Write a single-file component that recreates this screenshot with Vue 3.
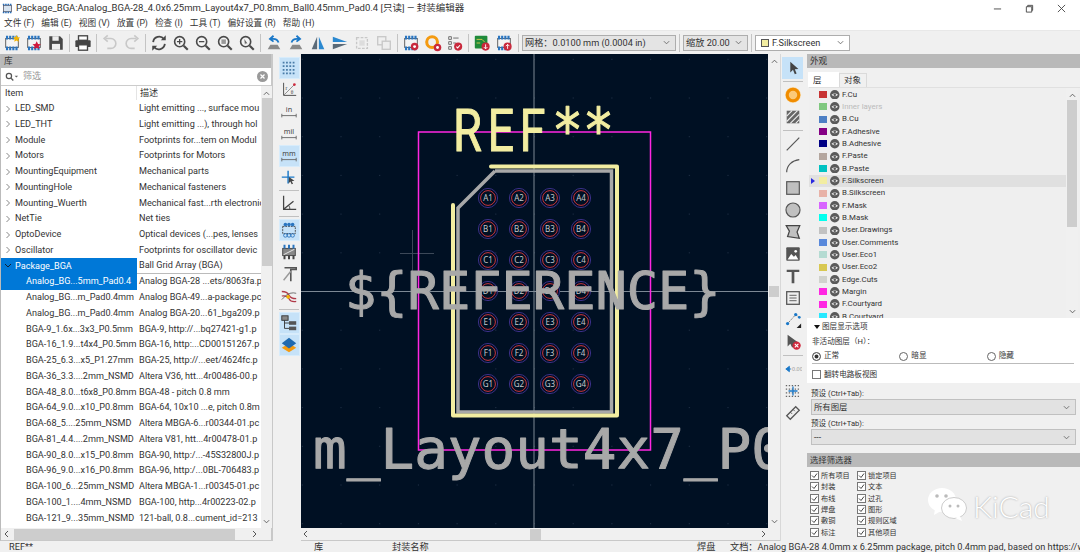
<template>
  <div class="app">
    <header class="titlebar">
      <div class="title-row">
        <svg class="app-icon" viewBox="0 0 14 14"><rect x="2" y="3" width="10" height="8" fill="#d8e4f0" stroke="#556" /><path d="M2 1v2M5 1v2M8 1v2M11 1v2M2 11v2M5 11v2M8 11v2M11 11v2" stroke="#2a6fb8" stroke-width="2" /></svg>
        <span class="title-text">Package_BGA:Analog_BGA-28_4.0x6.25mm_Layout4x7_P0.8mm_Ball0.45mm_Pad0.4 [只读] — 封装编辑器</span>
        <div class="win-btns">
          <svg viewBox="0 0 10 10"><path d="M1 5.5h8" stroke="#444" /></svg>
          <svg viewBox="0 0 10 10"><path d="M1.5 3h6v6h-6zM3 3V1.5h5.5V7H7.5" fill="none" stroke="#444" /></svg>
          <svg viewBox="0 0 10 10"><path d="M1 1l8 8M9 1l-8 8" stroke="#444" /></svg>
        </div>
      </div>
      <nav class="menu">
        <span v-for="m in menus" :key="m">{{ m }}</span>
      </nav>
    </header>

    <div class="toolbar">
      <template v-for="(t, i) in topTools" :key="i">
        <i v-if="t === '|'" class="sep-v"></i>
        <span v-else class="tool"><svg viewBox="0 0 20 20" v-html="icons[t]"></svg></span>
      </template>
      <i class="sep-v tight"></i>
      <div class="combo grid-combo"><span>网格：0.0100 mm (0.0004 in)</span><svg viewBox="0 0 8 5"><path d="M1 1l3 3 3-3" fill="none" stroke="#666" /></svg></div>
      <i class="sep-v tight"></i>
      <div class="combo zoom-combo"><span>缩放 20.00</span><svg viewBox="0 0 8 5"><path d="M1 1l3 3 3-3" fill="none" stroke="#666" /></svg></div>
      <i class="sep-v tight"></i>
      <div class="combo layer-combo"><b class="layer-dot"></b><span>F.Silkscreen</span><svg viewBox="0 0 8 5"><path d="M1 1l3 3 3-3" fill="none" stroke="#666" /></svg></div>
    </div>

    <main class="main">
      <aside class="lib">
        <div class="pane-head">库</div>
        <div class="search">
          <svg class="search-ico" viewBox="0 0 16 10"><circle cx="4.5" cy="4.5" r="3" fill="none" stroke="#555" stroke-width="1.4" /><path d="M7 7l2.5 2.5" stroke="#555" stroke-width="1.5" /><path d="M11 4h4l-2 2z" fill="#666" /></svg>
          <span class="search-text">筛选</span>
          <svg class="search-x" viewBox="0 0 11 11"><circle cx="5.5" cy="5.5" r="5.5" fill="#9a9a9a" /><path d="M3.5 3.5l4 4M7.5 3.5l-4 4" stroke="#fff" stroke-width="1.2" /></svg>
        </div>
        <div class="table-wrap">
          <div class="table">
            <div class="thead"><span class="th-a">Item</span><span class="th-b">描述</span></div>
            <div v-for="(r, i) in rows" :key="i" class="row">
              <span class="cell-a" :class="{ sel: r.sel, child: r.child }">
                <svg v-if="!r.child" class="arrow" viewBox="0 0 6 8"><path :d="r.open ? 'M0 2l3 3 3-3' : 'M1.5 1l3 3-3 3'" fill="none" :stroke="r.open ? '#123' : '#888'" /></svg>
                {{ r.n }}
              </span>
              <span class="cell-b" :class="{ under: r.open }">{{ r.d }}</span>
            </div>
          </div>
          <div class="vscroll">
            <svg viewBox="0 0 8 5"><path d="M1 4l3-3 3 3" fill="none" stroke="#555" /></svg>
            <div class="vthumb"></div>
            <svg class="down" viewBox="0 0 8 5"><path d="M1 1l3 3 3-3" fill="none" stroke="#555" /></svg>
          </div>
        </div>
        <div class="hscroll">
          <svg viewBox="0 0 5 8"><path d="M4 1L1 4l3 3" fill="none" stroke="#555" /></svg>
          <div class="hthumb"></div>
          <svg viewBox="0 0 5 8"><path d="M1 1l3 3-3 3" fill="none" stroke="#555" /></svg>
        </div>
      </aside>

      <div class="strip left-strip">
        <template v-for="(t, i) in leftTools" :key="i">
          <i v-if="t === '|'" class="sep-h"></i>
          <i v-else-if="t === '-'" class="sep-h thin"></i>
          <span v-else class="vtool" :class="{ on: t.on }"><svg viewBox="0 0 20 20" v-html="icons[t.i]"></svg></span>
        </template>
      </div>

      <section class="canvas-col">
        <div class="canvas-row">
          <svg class="canvas" viewBox="301 54 467 474">
            <defs>
              <pattern id="griddots" x="534" y="291" width="38.7" height="38.7" patternUnits="userSpaceOnUse">
                <rect x="0" y="0" width="1" height="1" fill="#24344a" />
              </pattern>
            </defs>
            <rect x="301" y="54" width="467" height="474" fill="#001023" />
            <rect x="301" y="54" width="467" height="474" fill="url(#griddots)" />
            <path d="M400 253.5h34M412.5 230v50" stroke="#3c4858" />
            <path d="M534 54v474M301 291.5h467" stroke="#7c8894" />
            <polyline points="495,171 611.5,171 611.5,412 458,412 458,208 495,171" fill="none" stroke="#a8a8a8" stroke-width="3.5" />
            <polyline points="491,166.5 617,166.5 617,415.5 453,415.5 453,205" fill="none" stroke="#f2eda1" stroke-width="4" stroke-linecap="round" stroke-linejoin="round" />
            <rect x="418.5" y="132" width="232" height="318" fill="none" stroke="#ff26e2" stroke-width="1.5" />
            <g v-for="p in pads" :key="p.t">
              <circle :cx="p.x" :cy="p.y" r="9.6" fill="#001023" stroke="#3a2f86" />
              <circle :cx="p.x" :cy="p.y" r="7.4" fill="none" stroke="#c8323c" />
              <text :x="p.x" :y="p.y + 3" class="pad-text" text-anchor="middle">{{ p.t }}</text>
            </g>
            <text x="453" y="151" class="fp-text silk ref-a" textLength="98" lengthAdjust="spacingAndGlyphs" letter-spacing="7">REF</text>
            <text x="552" y="151" class="fp-text silk" textLength="62" lengthAdjust="spacingAndGlyphs">**</text>
            <text x="345" y="309" class="fp-text fab ref">${REFERENCE}</text>
            <text x="313" y="468" class="fp-text fab val">m_Layout4x7_P0</text>
          </svg>
          <div class="vscroll cv">
            <svg viewBox="0 0 8 5"><path d="M1 4l3-3 3 3" fill="none" stroke="#555" /></svg>
            <div class="cv-thumb"></div>
            <svg class="down" viewBox="0 0 8 5"><path d="M1 1l3 3 3-3" fill="none" stroke="#555" /></svg>
          </div>
        </div>
        <div class="hscroll cvh">
          <svg viewBox="0 0 5 8"><path d="M4 1L1 4l3 3" fill="none" stroke="#555" /></svg>
          <div class="cvh-track"><div class="cvh-thumb"></div></div>
          <svg viewBox="0 0 5 8"><path d="M1 1l3 3-3 3" fill="none" stroke="#555" /></svg>
        </div>
      </section>

      <div class="strip right-strip">
        <template v-for="(t, i) in rightTools" :key="i">
          <i v-if="t === '|'" class="sep-h"></i>
          <span v-else class="vtool" :class="{ on: t.on }"><svg viewBox="0 0 20 20" v-html="icons[t.i]"></svg></span>
        </template>
      </div>

      <aside class="side">
        <div class="pane-head">外观</div>
        <div class="tabs"><span class="tab active">层</span><span class="tab">对象</span></div>
        <div class="layers-box">
          <div class="layers">
            <div v-for="l in layers" :key="l.n" class="layer" :class="{ cur: l.n === 'F.Silkscreen', dim: l.dim }">
              <svg v-if="l.n === 'F.Silkscreen'" class="cur-mark" viewBox="0 0 4 6"><path d="M0 0l4 3-4 3z" fill="#2a2ae0" /></svg>
              <b class="swatch" :style="{ background: l.c }"></b>
              <svg class="eye" viewBox="0 0 10 10"><circle cx="5" cy="5" r="5" fill="#5a5a5a" /><path d="M1.5 5Q5 1.8 8.5 5 5 8.2 1.5 5z" fill="#e8e8e8" /><circle cx="5" cy="5" r="1.3" fill="#5a5a5a" /></svg>
              <span>{{ l.n }}</span>
            </div>
          </div>
          <div class="vscroll lay">
            <svg viewBox="0 0 8 5"><path d="M1 4l3-3 3 3" fill="none" stroke="#555" /></svg>
            <div class="lay-thumb"></div>
            <svg class="down" viewBox="0 0 8 5"><path d="M1 1l3 3 3-3" fill="none" stroke="#555" /></svg>
          </div>
        </div>
        <div class="opts">
          <div class="opts-title"><svg viewBox="0 0 6 4"><path d="M0 0h6L3 4z" fill="#111" /></svg>图层显示选项</div>
          <div class="opts-label">非活动图层（H）：</div>
          <div class="radios">
            <label><i class="radio on"></i>正常</label>
            <label><i class="radio"></i>暗显</label>
            <label><i class="radio"></i>隐藏</label>
          </div>
          <label class="flip"><i class="box"></i>翻转电路板视图</label>
        </div>
        <div class="presets">
          <div class="pre-label">预设 (Ctrl+Tab):</div>
          <div class="pre-combo"><span>所有图层</span><svg viewBox="0 0 8 5"><path d="M1 1l3 3 3-3" fill="none" stroke="#666" /></svg></div>
          <div class="pre-label">预设 (Ctrl+Tab):</div>
          <div class="pre-combo"><span>---</span><svg viewBox="0 0 8 5"><path d="M1 1l3 3 3-3" fill="none" stroke="#666" /></svg></div>
        </div>
        <div class="pane-head filter-head">选择筛选器</div>
        <div class="filters">
          <label v-for="f in filters" :key="f" class="filter">
            <svg viewBox="0 0 9 9"><rect x=".5" y=".5" width="8" height="8" fill="#fff" stroke="#777" /><path d="M2 4.5l2 2 3-4" fill="none" stroke="#444" /></svg>{{ f }}
          </label>
        </div>
      </aside>
    </main>

    <footer class="status">
      <span class="st-a">REF**</span>
      <span class="st-b">库</span>
      <span class="st-c">封装名称</span>
      <span class="st-d">焊盘</span>
      <span class="st-e">文档：Analog BGA-28 4.0mm x 6.25mm package, pitch 0.4mm pad, based on https://w</span>
    </footer>

    <div class="watermark">
      <svg viewBox="0 0 40 34">
        <ellipse cx="15" cy="13" rx="14" ry="12" fill="#fff" />
        <path d="M8 22l-1 6 7-4z" fill="#fff" />
        <ellipse cx="27" cy="21" rx="12.5" ry="10.5" fill="#fff" stroke="#ccc" stroke-width="1" />
        <path d="M33 29l2 5-7-3z" fill="#fff" />
        <circle cx="10" cy="9" r="1.8" fill="#bbb" /><circle cx="19" cy="9" r="1.8" fill="#bbb" />
        <circle cx="23" cy="19" r="1.5" fill="#bbb" /><circle cx="31" cy="19" r="1.5" fill="#bbb" />
      </svg>
      <span>KiCad</span>
    </div>
  </div>
</template>

<script setup>
const menus = ['文件 (F)', '编辑 (E)', '视图 (V)', '放置 (P)', '检查 (I)', '工具 (T)', '偏好设置 (R)', '帮助 (H)']

const chip = '<rect x="3" y="5" width="14" height="10" fill="#f4f4f4" stroke="#555"/><path d="M4.5 2v4M8 2v4M11.5 2v4M15 2v4M4.5 14v4M8 14v4M11.5 14v4M15 14v4" stroke="#2a75c0" stroke-width="2.4"/>'
const gear = (x, y) => `<circle cx="${x}" cy="${y}" r="4.2" fill="#c8283c"/><circle cx="${x}" cy="${y}" r="1.6" fill="#fff"/>`
const lens = '<circle cx="8.5" cy="8.5" r="5.6" fill="#f4f4f4" stroke="#4a4a4a" stroke-width="1.8"/><path d="M13 13l4.5 4.5" stroke="#4a4a4a" stroke-width="2.4"/>'

const icons = {
  fpNew: chip + '<path d="M15 1l1.2 2.6 2.8.3-2 2 .5 2.8-2.5-1.4-2.5 1.4.5-2.8-2-2 2.8-.3z" fill="#f4b400"/>',
  fpOpen: chip + '<path d="M13 8l1.5 3 3.2.4-2.4 2.2.7 3.2-3-1.6-3 1.6.7-3.2-2.4-2.2 3.2-.4z" fill="#d0183c"/>',
  save: '<path d="M2.5 2.5h12l3 3v12h-15z" fill="#484848"/><rect x="6" y="2.5" width="7" height="5" fill="#eee"/><rect x="5.5" y="11" width="9" height="6.5" fill="#eee"/>',
  print: '<rect x="5" y="2" width="10" height="5" fill="#fff" stroke="#444" stroke-width="1.5"/><rect x="1.5" y="7" width="17" height="7.5" rx="1" fill="#444"/><rect x="5" y="12" width="10" height="6" fill="#fff" stroke="#444" stroke-width="1.5"/>',
  undo: '<path d="M5 5h6a5 5 0 0 1 0 11H7" fill="none" stroke="#c8c8c8" stroke-width="1.8"/><path d="M7.5 1.5L3.5 5l4 3.5" fill="none" stroke="#c8c8c8" stroke-width="1.8"/>',
  redo: '<path d="M15 5H9a5 5 0 0 0 0 11h4" fill="none" stroke="#c8c8c8" stroke-width="1.8"/><path d="M12.5 1.5l4 3.5-4 3.5" fill="none" stroke="#c8c8c8" stroke-width="1.8"/>',
  refresh: '<path d="M3.5 9A6.8 6.8 0 0 1 15.5 5.5M16.5 11A6.8 6.8 0 0 1 4.5 14.5" fill="none" stroke="#484848" stroke-width="2"/><path d="M17.5 1.5v5.5h-5.5zM2.5 18.5V13H8z" fill="#484848"/>',
  zoomIn: lens + '<path d="M5.5 8.5h6M8.5 5.5v6" stroke="#4a4a4a" stroke-width="1.4"/>',
  zoomOut: lens + '<path d="M5.5 8.5h6" stroke="#4a4a4a" stroke-width="1.4"/>',
  zoomFit: lens + '<rect x="6" y="6" width="5" height="5" fill="#999"/>',
  zoomObj: lens + '<path d="M7 5.5l3.5 5-2-.3-.8 1.8z" fill="#666"/>',
  rotL: '<path d="M3 17h14l-3-5H6z" fill="#8a8a8a"/><path d="M15 9.5C14 6 10.5 5 7 5.5M9.5 2L5.5 5.5l4 3" fill="none" stroke="#1a78c8" stroke-width="2"/>',
  rotR: '<path d="M3 17h14l-3-5H6z" fill="#8a8a8a"/><path d="M5 9.5C6 6 9.5 5 13 5.5M10.5 2l4 3.5-4 3" fill="none" stroke="#1a78c8" stroke-width="2"/>',
  mirV: '<path d="M9 3v14H3z" fill="#5a6a78"/><path d="M11 3v14h6z" fill="#2a88d0"/>',
  mirH: '<path d="M2 3l16 6H2z" fill="#2a88d0"/><path d="M2 17l16-6H2z" fill="#5a6a78"/>',
  group: '<rect x="4" y="4" width="12" height="12" fill="none" stroke="#c8c8c8" stroke-width="1.5" stroke-dasharray="3 1.5"/><rect x="7" y="7" width="6" height="6" fill="#ddd"/>',
  ungroup: '<rect x="3" y="3" width="9" height="9" fill="none" stroke="#c8c8c8" stroke-width="1.5"/><rect x="8" y="8" width="9" height="9" fill="#eee" stroke="#c8c8c8" stroke-width="1.5"/>',
  fpProp: chip + gear(14, 14),
  padProp: '<circle cx="9" cy="9" r="6" fill="none" stroke="#f49a10" stroke-width="3.4"/>' + gear(15, 15),
  check: '<path d="M3 3h3v3H3zM3 8.500h3v3H3zM3 14h3v3H3z" fill="none" stroke="#666"/><path d="M8 4.500h6M8 10h3" stroke="#666"/><circle cx="13.500" cy="14" r="4.500" fill="#c8283c"/><path d="M11.500 14l1.500 1.500 2.500-3" fill="none" stroke="#fff" stroke-width="1.200"/>',
  pcbIn: '<rect x="2" y="2" width="14" height="14" rx="1" fill="#1f8a3a"/><path d="M4 6h6l3 3M4 10h4" stroke="#d8c850" fill="none"/><circle cx="14" cy="14" r="4.500" fill="#c8283c"/><path d="M14 11.500v5M12 14.500l2 2 2-2" stroke="#fff" fill="none"/>',
  fpOut: chip + '<circle cx="14" cy="14" r="4.500" fill="#c8283c"/><path d="M14 16.500v-5M12 13.500l2-2 2 2" stroke="#fff" fill="none"/>',
  grid: '<path d="M3 4h14M3 8h14M3 12h14M3 16h14" stroke="#4a7ca8" stroke-width="2" stroke-dasharray="2 1.700"/>',
  polar: '<path d="M4 2v14h14" fill="none" stroke="#444"/><path d="M4 16L16 4" stroke="#888"/><circle cx="16" cy="4" r="1.500" fill="#d0283c"/><text x="6" y="10" font-size="6" fill="#444" font-family="Liberation Serif">r</text><text x="12" y="14" font-size="6" fill="#444" font-family="Liberation Serif">θ</text>',
  inch: '<text x="10" y="10" font-size="8" text-anchor="middle" fill="#444" font-family="Noto Sans">in</text><path d="M2 14h16M2 12v4M18 12v4" stroke="#666"/>',
  mil: '<text x="10" y="10" font-size="8" text-anchor="middle" fill="#444" font-family="Noto Sans">mil</text><path d="M2 14h16M2 12v4M18 12v4" stroke="#666"/>',
  mm: '<text x="10" y="10" font-size="8" text-anchor="middle" fill="#444" font-family="Noto Sans">mm</text><path d="M2 14h16M2 12v4M18 12v4" stroke="#666"/>',
  cursorFull: '<path d="M9 2v14M2 9h14" stroke="#1a78c8" stroke-width="1.600"/><path d="M10 9l6 4-3 .500 1.500 3-1.500.500-1.500-3-2 2z" fill="#444"/>',
  angle: '<path d="M4 2v15h14M4 17L15 8" fill="none" stroke="#444" stroke-width="1.400"/><path d="M11 17a7 7 0 0 0-1.500-4.500" fill="none" stroke="#444"/>',
  padsSketch: '<rect x="3" y="6" width="14" height="8" fill="none" stroke="#444" stroke-dasharray="2 1"/><circle cx="6" cy="4" r="2" fill="#2a75c0"/><circle cx="10" cy="4" r="2" fill="#2a75c0"/><circle cx="14" cy="4" r="2" fill="#2a75c0"/><circle cx="6" cy="16" r="2" fill="none" stroke="#2a75c0"/><circle cx="10" cy="16" r="2" fill="none" stroke="#2a75c0"/><circle cx="14" cy="16" r="2" fill="none" stroke="#2a75c0"/>',
  modSketch: '<rect x="3" y="6" width="14" height="8" fill="#888" stroke="#444"/><path d="M5 2v4M10 2v4M15 2v4" stroke="#2a75c0" stroke-width="2.200"/><path d="M5 14v4M10 14v4M15 14v4" stroke="#444" stroke-width="2.200"/><path d="M4 13L16 7" stroke="#eee"/>',
  textSketch: '<path d="M5 3h13v2H12v13" fill="none" stroke="#555" stroke-width="1.800"/><path d="M12 7L4 17" stroke="#999" stroke-width="1.600"/>',
  ratsnest: '<path d="M2 5q6 0 8 4t8 4M2 10q6-1 8 3t8 3" fill="none" stroke="#b03a48" stroke-width="1.400"/><path d="M2 14q5-6 9-7t7 0" fill="none" stroke="#666"/><circle cx="9" cy="11" r="2" fill="#f4b400"/>',
  tree: '<rect x="2" y="2" width="7" height="5" fill="#888" stroke="#333"/><rect x="10" y="8" width="8" height="4" fill="#555"/><rect x="10" y="14" width="8" height="4" fill="#555"/><path d="M5 7v9h5M5 10h5" fill="none" stroke="#333"/>',
  stack: '<path d="M10 8l8 5-8 5-8-5z" fill="#f49a10"/><path d="M10 2l8 6-8 6-8-6z" fill="#1f6ab0"/>',
  arrow: '<path d="M7 3l0 12 3-3 2 5 2-1-2-4.500 4-.500z" fill="#444"/>',
  pad: '<circle cx="10" cy="10" r="8.600" fill="#fbc97a"/><circle cx="10" cy="10" r="6.400" fill="none" stroke="#f08c00" stroke-width="3.400"/>',
  zone: '<rect x="3" y="3" width="14" height="14" fill="#666"/><path d="M3 9l6-6M3 15L15 3M7 17L17 7M13 17l4-4" stroke="#eee" stroke-width="1.200"/>',
  line: '<path d="M3 17L17 3" stroke="#555" stroke-width="1.300"/>',
  arc: '<path d="M3 17C3 9 9 4 17 3" fill="none" stroke="#555" stroke-width="1.300"/>',
  rect: '<rect x="3" y="3" width="14" height="14" fill="#c0c0c0" stroke="#555" stroke-width="1.300"/>',
  circle: '<circle cx="10" cy="10" r="7.800" fill="#c0c0c0" stroke="#555" stroke-width="1.300"/>',
  poly: '<path d="M2.500 3h15l-3 7 2.500 7-13-2 2-6z" fill="#c0c0c0" stroke="#444" stroke-width="1.400"/>',
  image: '<rect x="2.500" y="2.500" width="15" height="15" rx="1" fill="#555"/><path d="M4 16l4-6 3 3 2-2 3 5z" fill="#fff"/><circle cx="13" cy="7" r="1.500" fill="#fff"/>',
  textT: '<path d="M3 3h14v2.500h-5.500V18h-3V5.500H3z" fill="#555"/>',
  textbox: '<rect x="3" y="3" width="14" height="14" fill="#eee" stroke="#555" stroke-width="1.400"/><path d="M6 7h8M6 10h8M6 13h8" stroke="#555"/>',
  nodes: '<path d="M4 14L13 4M13 4l4 3" stroke="#666" stroke-dasharray="1.500 1"/><circle cx="4" cy="14" r="1.800" fill="#1a78c8"/><circle cx="13" cy="4" r="1.800" fill="#1a78c8"/><circle cx="17" cy="7" r="1.500" fill="#1a78c8"/><path d="M19 19h-5l5-5z" fill="#222"/>',
  delTool: '<path d="M4 2l0 13 3-3 2 4 7-3-4-2 3-1z" fill="#555"/><circle cx="14" cy="14" r="4.600" fill="#d0283c"/><path d="M12 12l4 4M16 12l-4 4" stroke="#fff" stroke-width="1.200"/>',
  anchor: '<path d="M2 10l4-3v6zM6 10h2" fill="#1a78c8" stroke="#1a78c8"/><text x="9" y="12" font-size="6" fill="#999" font-family="Noto Sans">0.00</text>',
  gridDots: '<path d="M2 4h16M2 8h16M2 12h16M2 16h16" stroke="#666" stroke-width="1.400" stroke-dasharray="1.500 1.800"/><path d="M10 5v10M5 10h10" stroke="#1a78c8" stroke-width="1.400"/>',
  ruler: '<path d="M3 13L13 3l4 4L7 17z" fill="#eee" stroke="#555" stroke-width="1.400"/><path d="M7 9l2 2M10 6l2 2" stroke="#555"/>'
}

const topTools = ['fpNew', 'fpOpen', 'save', '|', 'print', '|', 'undo', 'redo', '|', 'refresh', 'zoomIn', 'zoomOut', 'zoomFit', 'zoomObj', '|', 'rotL', 'rotR', 'mirV', 'mirH', 'group', 'ungroup', '|', 'fpProp', 'padProp', 'check', '|', 'pcbIn', 'fpOut']

const leftTools = [
  { i: 'grid', on: true }, { i: 'polar' }, { i: 'inch' }, { i: 'mil' }, { i: 'mm', on: true }, { i: 'cursorFull' }, '-',
  { i: 'angle' }, '|', { i: 'padsSketch', on: true }, { i: 'modSketch' }, { i: 'textSketch' }, { i: 'ratsnest' }, '|',
  { i: 'tree', on: true }, { i: 'stack', on: true }
]

const rightTools = [
  { i: 'arrow', on: true }, '|', { i: 'pad' }, { i: 'zone' }, '|', { i: 'line' }, { i: 'arc' }, { i: 'rect' }, { i: 'circle' },
  { i: 'poly' }, { i: 'image' }, { i: 'textT' }, { i: 'textbox' }, { i: 'nodes' }, { i: 'delTool' }, '|', { i: 'anchor' }, { i: 'gridDots' }, { i: 'ruler' }
]

const rows = [
  { n: 'LED_SMD', d: 'Light emitting ..., surface mou' },
  { n: 'LED_THT', d: 'Light emitting ...), through hol' },
  { n: 'Module', d: 'Footprints for...tem on Modul' },
  { n: 'Motors', d: 'Footprints for Motors' },
  { n: 'MountingEquipment', d: 'Mechanical parts' },
  { n: 'MountingHole', d: 'Mechanical fasteners' },
  { n: 'Mounting_Wuerth', d: 'Mechanical fast...rth electronic' },
  { n: 'NetTie', d: 'Net ties' },
  { n: 'OptoDevice', d: 'Optical devices (...pes, lenses' },
  { n: 'Oscillator', d: 'Footprints for oscillator devic' },
  { n: 'Package_BGA', d: 'Ball Grid Array (BGA)', open: true, sel: true },
  { n: 'Analog_BG...5mm_Pad0.4', d: 'Analog BGA-28 ...ets/8063fa.p', child: true, sel: true },
  { n: 'Analog_BG...m_Pad0.4mm', d: 'Analog BGA-49...a-package.pc', child: true },
  { n: 'Analog_BG...m_Pad0.4mm', d: 'Analog BGA-20...61_bga209.p', child: true },
  { n: 'BGA-9_1.6x...3x3_P0.5mm', d: 'BGA-9, http://...bq27421-g1.p', child: true },
  { n: 'BGA-16_1.9...t4x4_P0.5mm', d: 'BGA-16, http:...CD00151267.p', child: true },
  { n: 'BGA-25_6.3...x5_P1.27mm', d: 'BGA-25, http://...eet/4624fc.p', child: true },
  { n: 'BGA-36_3.3....2mm_NSMD', d: 'Altera V36, htt...4r00486-00.p', child: true },
  { n: 'BGA-48_8.0...t6x8_P0.8mm', d: 'BGA-48 - pitch 0.8 mm', child: true },
  { n: 'BGA-64_9.0...x10_P0.8mm', d: 'BGA-64, 10x10 ...e, pitch 0.8m', child: true },
  { n: 'BGA-68_5....25mm_NSMD', d: 'Altera MBGA-6...r00344-01.pc', child: true },
  { n: 'BGA-81_4.4....2mm_NSMD', d: 'Altera V81, htt...4r00478-01.p', child: true },
  { n: 'BGA-90_8.0...x15_P0.8mm', d: 'BGA-90, http:/...-45S32800J.p', child: true },
  { n: 'BGA-96_9.0...x16_P0.8mm', d: 'BGA-96, http:/...0BL-706483.p', child: true },
  { n: 'BGA-100_6...25mm_NSMD', d: 'Altera MBGA-1...r00345-01.pc', child: true },
  { n: 'BGA-100_1....4mm_NSMD', d: 'BGA-100, http...4r00223-02.p', child: true },
  { n: 'BGA-121_9...35mm_NSMD', d: '121-ball, 0.8...cument_id=213', child: true }
]

const pads = []
'ABCDEFG'.split('').forEach((letter, r) => {
  for (let c = 0; c < 4; c++) {
    pads.push({ t: letter + (c + 1), x: 488 + c * 31, y: 198 + r * 31 })
  }
})

const layers = [
  { n: 'F.Cu', c: '#c83434' },
  { n: 'Inner layers', c: '#7fc87f', dim: true },
  { n: 'B.Cu', c: '#4d7fc4' },
  { n: 'F.Adhesive', c: '#840084' },
  { n: 'B.Adhesive', c: '#000084' },
  { n: 'F.Paste', c: '#b4a69e' },
  { n: 'B.Paste', c: '#00c2c2' },
  { n: 'F.Silkscreen', c: '#f2eda1' },
  { n: 'B.Silkscreen', c: '#e8b2a7' },
  { n: 'F.Mask', c: '#d864ff' },
  { n: 'B.Mask', c: '#02ffee' },
  { n: 'User.Drawings', c: '#c2c2c2' },
  { n: 'User.Comments', c: '#5989db' },
  { n: 'User.Eco1', c: '#b4dbd2' },
  { n: 'User.Eco2', c: '#d8c852' },
  { n: 'Edge.Cuts', c: '#d0d2cd' },
  { n: 'Margin', c: '#ff26e2' },
  { n: 'F.Courtyard', c: '#ff26e2' },
  { n: 'B.Courtyard', c: '#26e9ff' }
]

const filters = ['所有项目', '锁定项目', '封装', '文本', '布线', '过孔', '焊盘', '图形', '敷铜', '规则区域', '标注', '其他项目']
</script>

<style>
html, body { margin: 0; background: #f0f0f0; }
</style>

<style scoped>
.app {
  position: relative;
  width: 1080px;
  height: 552px;
  overflow: hidden;
  display: flex;
  flex-direction: column;
  background: #f0f0f0;
  color: #2a2a2a;
  font-family: Roboto, "Noto Sans CJK SC", sans-serif;
  font-size: 9.1px;
  line-height: 1;
}
.titlebar { height: 30px; background: #fff; flex: none; }
.title-row { height: 16px; display: flex; align-items: center; }
.app-icon { width: 11px; height: 11px; margin: 0 3px 0 2px; }
.title-text { font-size: 9.5px; color: #333; white-space: nowrap; }
.win-btns { margin-left: auto; display: flex; padding-right: 14px; }
.win-btns svg { width: 9px; height: 9px; margin-left: 23px; }
.menu { height: 14px; display: flex; align-items: center; gap: 7px; padding-left: 4px; font-size: 8.7px; color: #333; }

.toolbar { height: 24px; flex: none; display: flex; align-items: center; padding-left: 1px; border-top: 1px solid #e8e8e8; box-sizing: border-box; }
.tool { width: 22px; height: 20px; display: flex; align-items: center; justify-content: center; flex: none; }
.tool svg { width: 18px; height: 18px; }
.sep-v { width: 1px; height: 18px; background: #c4c4c4; flex: none; }
.toolbar > .sep-v { margin: 0 2px; }
.toolbar > .sep-v.tight { margin: 0 3px; }
.combo { height: 16px; display: flex; align-items: center; box-sizing: border-box; border: 1px solid #adadad; background: #e4e4e4; padding: 0 5px 0 2px; font-size: 9.2px; white-space: nowrap; color: #333; flex: none; }
.combo svg { width: 7px; height: 5px; margin-left: auto; }
.grid-combo { width: 154px; }
.zoom-combo { width: 65px; }
.layer-combo { width: 95px; background: #fff; }
.layer-dot { width: 6px; height: 6px; margin: 0 3px 0 3px; background: #f2eda1; border: 1px solid #555; }

.main { height: 487px; display: flex; flex: none; }
.pane-head { height: 14px; flex: none; background: #b9b9b9; display: flex; align-items: center; padding-left: 3px; color: #333; font-size: 8.6px; }

.lib { width: 273px; flex: none; box-sizing: border-box; border-left: 1px solid #bbb; border-right: 2px solid #c8c8c8; border-bottom: 1px solid #c8c8c8; display: flex; flex-direction: column; }
.search { height: 18px; flex: none; background: #fff; display: flex; align-items: center; border-bottom: 1px solid #ccc; box-sizing: border-box; }
.search-ico { width: 14px; height: 9px; margin-left: 4px; }
.search-text { margin-left: 4px; color: #999; }
.search-x { width: 11px; height: 11px; margin-left: auto; margin-right: 3px; }
.table-wrap { flex: 1; display: flex; min-height: 0; background: #fff; }
.table { width: 260px; flex: none; overflow: hidden; }
.thead { height: 14.7px; display: flex; align-items: center; color: #333; }
.th-a { width: 136px; padding-left: 4px; box-sizing: border-box; border-right: 1px solid #e4e4e4; height: 14px; display: flex; align-items: center; }
.th-b { padding-left: 3px; }
.row { height: 15.75px; display: flex; }
.cell-a { width: 136px; flex: none; display: flex; align-items: center; padding-left: 4px; box-sizing: border-box; white-space: nowrap; color: #333; }
.cell-a.child { padding-left: 25px; }
.cell-a.sel { background: #0078d7; color: #fff; }
.arrow { width: 6px; height: 8px; margin-right: 4px; flex: none; }
.cell-b { flex: 1; min-width: 0; overflow: hidden; white-space: nowrap; display: flex; align-items: center; padding-left: 2px; color: #333; }
.cell-b.under { border-bottom: 1px solid #bbb; }
.vscroll { width: 11px; flex: none; background: #f0f0f0; display: flex; flex-direction: column; align-items: center; position: relative; }
.vscroll svg { width: 7px; height: 5px; margin-top: 5px; flex: none; }
.vscroll .down { margin: auto 0 4px; }
.vthumb { width: 10px; height: 168px; margin-top: 2px; background: #cdcdcd; flex: none; }
.hscroll { height: 12px; flex: none; display: flex; align-items: center; background: #f0f0f0; padding: 0 3px; box-sizing: border-box; margin-right: 11px; }
.hscroll svg { width: 5px; height: 8px; flex: none; }
.hthumb { width: 221px; height: 11px; background: #cdcdcd; margin: 0 auto 0 5px; }

.strip { flex: none; display: flex; flex-direction: column; align-items: center; background: #f0f0f0; box-sizing: border-box; }
.left-strip { width: 28px; padding-top: 3px; padding-left: 4px; }
.right-strip { width: 27px; padding-top: 3px; padding-right: 3px; border-left: 1px solid #d8d8d8; }
.vtool { width: 21px; height: 22px; display: flex; align-items: center; justify-content: center; flex: none; box-sizing: border-box; }
.vtool.on { background: #c6e2f8; }
.vtool svg { width: 18px; height: 18px; }
.left-strip .vtool.on { border: 1px solid #d8ecfb; }
.sep-h { width: 20px; height: 1px; background: #c0c0c0; margin: 2px 0; flex: none; }
.sep-h.thin { margin: 1px 0; }

.canvas-col { width: 479px; flex: none; display: flex; flex-direction: column; box-sizing: border-box; border-bottom: 1px solid #c8c8c8; }
.canvas-row { height: 474px; display: flex; flex: none; }
.canvas { width: 467px; height: 474px; display: block; flex: none; }
.vscroll.cv { width: 12px; }
.cv-thumb { width: 10px; height: 11px; background: #cdcdcd; margin-top: 222px; flex: none; }
.hscroll.cvh { margin-right: 12px; padding: 0 2px; height: 12px; }
.cvh-track { flex: 1; padding-left: 222px; padding-right: 5px; }
.cvh-thumb { width: 11px; height: 11px; background: #cdcdcd; }

.side { flex: 1; min-width: 0; display: flex; flex-direction: column; font-size: 7.9px; }
.tabs { height: 19px; flex: none; display: flex; align-items: flex-end; padding-left: 1px; }
.tab { height: 14px; width: 28px; display: flex; align-items: center; padding-left: 4px; box-sizing: border-box; border: 1px solid #dadada; border-bottom: 0; color: #333; font-size: 8.5px; }
.tab.active { height: 15px; width: 31px; background: #fff; border-color: #fff; }
.layers-box { height: 231px; flex: none; display: flex; margin-left: 2px; box-sizing: border-box; border-top: 1px solid #e0e0e0; background: #efefef; }
.layers { flex: 1; min-width: 0; overflow: hidden; padding-top: .5px; }
.layer { height: 12.33px; display: flex; align-items: center; position: relative; padding-left: 10px; color: #333; }
.layer.cur { background: #e0e0e0; }
.layer.dim { color: #bbb; }
.cur-mark { position: absolute; left: 2px; top: 3px; width: 4px; height: 6px; }
.swatch { width: 8px; height: 7px; flex: none; }
.eye { width: 9.5px; height: 9.5px; margin: 0 2.5px 0 3px; flex: none; }
.vscroll.lay { width: 12px; margin-right: 2px; }
.lay-thumb { width: 10px; height: 127px; margin-top: 2px; background: #cdcdcd; flex: none; }
.opts { height: 65px; flex: none; background: #fff; padding: 4px 5px 0 5px; box-sizing: border-box; color: #333; font-size: 7.6px; }
.opts-title { display: flex; align-items: center; height: 10px; padding-left: 2px; }
.opts-title svg { width: 6px; height: 4px; margin-right: 2px; }
.opts-label { margin-top: 6px; height: 10px; }
.radios { display: flex; height: 12px; margin-top: 2px; align-items: center; border-bottom: 1px solid #bbb; padding-bottom: 1px; width: 262px; }
.radios label { width: 88.5px; display: flex; align-items: center; }
.radio { width: 9px; height: 9px; box-sizing: border-box; border-radius: 50%; border: 1px solid #666; margin-right: 3px; background: #fff; }
.radio.on { background: #333; box-shadow: inset 0 0 0 1.5px #fff; }
.flip { display: flex; align-items: center; margin-top: 6px; }
.box { width: 9px; height: 9px; box-sizing: border-box; border: 1px solid #777; margin-right: 3px; }
.presets { height: 70px; flex: none; padding: 5px 4px 0 4px; box-sizing: border-box; }
.pre-label { height: 11px; color: #333; font-size: 7.6px; display: flex; align-items: center; }
.pre-combo { height: 16px; background: #e2e2e2; border: 1px solid #c0c0c0; box-sizing: border-box; margin-bottom: 3px; display: flex; align-items: center; padding: 0 5px 0 2px; color: #333; font-size: 8.4px; }
.pre-combo svg { width: 7px; height: 5px; margin-left: auto; }
.filter-head { font-size: 8.4px; }
.filters { padding: 3px 0 0 3px; display: grid; grid-template-columns: 47px 60px; grid-auto-rows: 11.3px; font-size: 7.2px; }
.filter { display: flex; align-items: center; color: #333; white-space: nowrap; }
.filter svg { width: 9px; height: 9px; margin-right: 2px; flex: none; }

.status { height: 11px; flex: none; font-size: 9.2px; color: #333; background: #f0f0f0; display: grid; grid-template-columns: 314px 78px 305px 33px 1fr; align-items: center; white-space: nowrap; overflow: hidden; }
.st-a { padding-left: 9px; }

.watermark { position: absolute; left: 927px; top: 487px; display: flex; align-items: center; gap: 6px; color: #fff; font-family: Lato, Roboto, sans-serif; font-weight: 300; font-size: 30px; text-shadow: 0 0 2px #999; pointer-events: none; }
.watermark svg { width: 40px; height: 34px; }
.watermark span { margin-top: 4px; }

.pad-text { font-family: "Noto Sans", sans-serif; font-size: 8px; fill: #c4c8cc; }
.fp-text { font-family: "DejaVu Sans Mono", monospace; font-size: 60px; stroke-linejoin: round; stroke-width: 1px; }
.fp-text.silk { fill: #f2eda1; stroke: #f2eda1; }
.fp-text.fab { fill: #a8a8a8; stroke: #a8a8a8; }
.fp-text.ref-a { font-family: Roboto, sans-serif; font-size: 60px; }
.fp-text.ref { font-size: 52px; }
.fp-text.val { font-size: 56px; }
</style>
